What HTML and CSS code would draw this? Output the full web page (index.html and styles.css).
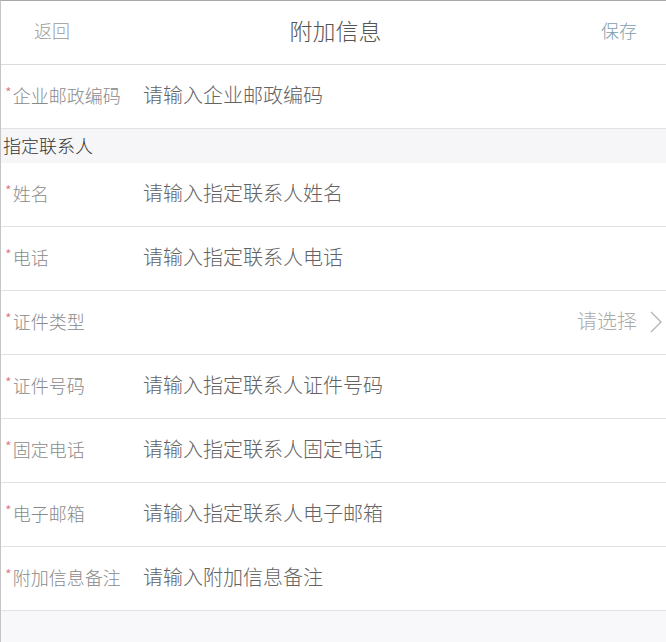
FILE: index.html
```html
<!DOCTYPE html>
<html lang="zh">
<head>
<meta charset="utf-8">
<link rel="stylesheet" href="styles.css">
</head>
<body>
<div class="page">
  <header class="nav">
    <span class="nav-back">返回</span>
    <span class="nav-title">附加信息</span>
    <span class="nav-save">保存</span>
  </header>
  <div class="row">
    <span class="label"><i class="req">*</i>企业邮政编码</span>
    <span class="input">请输入企业邮政编码</span>
  </div>
  <div class="section">指定联系人</div>
  <div class="row">
    <span class="label"><i class="req">*</i>姓名</span>
    <span class="input">请输入指定联系人姓名</span>
  </div>
  <div class="row">
    <span class="label"><i class="req">*</i>电话</span>
    <span class="input">请输入指定联系人电话</span>
  </div>
  <div class="row">
    <span class="label"><i class="req">*</i>证件类型</span>
    <span class="select">请选择
      <svg class="chev" width="14" height="24" viewBox="0 0 14 24"><path d="M2 2 L12 12 L2 22" fill="none" stroke="#b5b5b5" stroke-width="1.4"/></svg>
    </span>
  </div>
  <div class="row">
    <span class="label"><i class="req">*</i>证件号码</span>
    <span class="input">请输入指定联系人证件号码</span>
  </div>
  <div class="row">
    <span class="label"><i class="req">*</i>固定电话</span>
    <span class="input">请输入指定联系人固定电话</span>
  </div>
  <div class="row">
    <span class="label"><i class="req">*</i>电子邮箱</span>
    <span class="input">请输入指定联系人电子邮箱</span>
  </div>
  <div class="row">
    <span class="label"><i class="req">*</i>附加信息备注</span>
    <span class="input">请输入附加信息备注</span>
  </div>
  <div class="rest"></div>
</div>
</body>
</html>
```
FILE: styles.css
```css
html, body {
  margin: 0;
  padding: 0;
  height: 100%;
}
body {
  font-family: "Noto Sans CJK SC", "Noto Sans", sans-serif;
  font-weight: 300;
  background: #f8f8fa;
}
.page {
  border-top: 1px solid #a8a8a8;
  border-left: 1px solid #c4c4c4;
  display: flex;
  flex-direction: column;
  box-sizing: border-box;
  height: 642px;
}
.nav {
  height: 64px;
  box-sizing: border-box;
  background: #fff;
  border-bottom: 1px solid #dcdcdc;
  display: flex;
  align-items: center;
  justify-content: space-between;
  padding: 0 29px 5px 33px;
  flex: none;
}
.nav-back {
  font-size: 18px;
  color: #9a9a9a;
  width: 60px;
}
.nav-title {
  font-size: 23px;
  color: #555;
}
.nav-save {
  font-size: 18px;
  color: #7e9db0;
  width: 60px;
  text-align: right;
}
.row {
  height: 64px;
  box-sizing: border-box;
  background: #fff;
  border-bottom: 1px solid #e2e2e2;
  display: flex;
  align-items: center;
  padding-bottom: 4px;
  flex: none;
}
.label {
  width: 142px;
  padding-left: 4px;
  font-size: 18px;
  color: #8a8a8a;
  display: flex;
  align-items: center;
  box-sizing: border-box;
}
.req {
  font-style: normal;
  color: #d9727a;
  font-size: 15px;
  margin-right: 1px;
  position: relative;
  top: -2px;
}
.input {
  font-size: 20px;
  color: #636363;
}
.select {
  margin-left: auto;
  display: flex;
  align-items: center;
  gap: 12px;
  font-size: 20px;
  color: #aaa;
  padding-right: 3px;
}
.chev {
  display: block;
  position: relative;
  top: 1px;
}
.section {
  height: 34px;
  box-sizing: border-box;
  background: #f6f6f8;
  display: flex;
  align-items: center;
  padding: 0 0 2px 2px;
  font-size: 18px;
  color: #333;
  flex: none;
}
.rest {
  flex: 1;
  background: #f8f8fa;
}
```
